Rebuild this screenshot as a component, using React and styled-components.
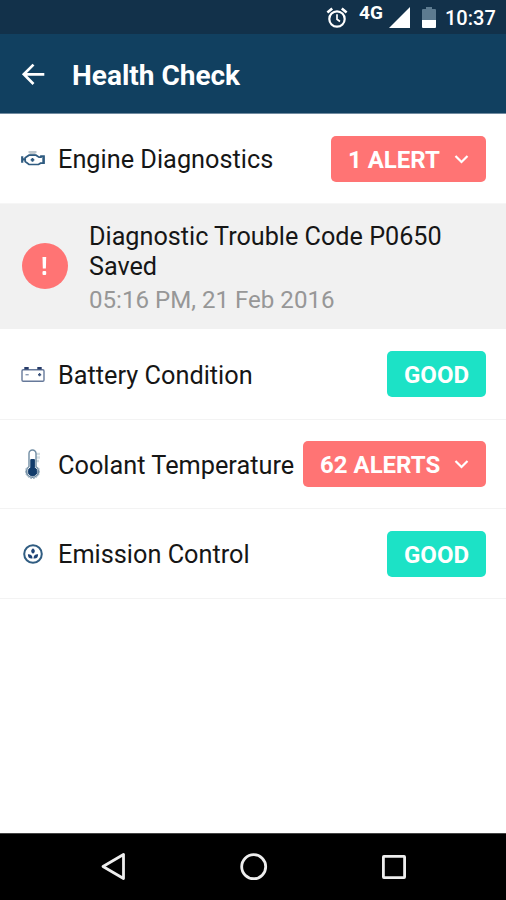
import React, { useState } from 'react';
import styled, { createGlobalStyle } from 'styled-components';

const GlobalStyle = createGlobalStyle`
  * {
    box-sizing: border-box;
  }

  body {
    margin: 0;
    background-color: #fff;
    font-family: Roboto, 'Liberation Sans', sans-serif;
  }

  svg {
    display: block;
    flex-shrink: 0;
  }
`;

// Styled Components
const Screen = styled.div`
  display: flex;
  flex-direction: column;
  height: 900px;
  width: 506px;
  overflow: hidden;
  background-color: #fff;
`;

const StatusBar = styled.div`
  display: flex;
  align-items: center;
  justify-content: flex-end;
  height: 34px;
  padding-right: 11px;
  padding-top: 1px;
  background-color: #12314a;
  color: #fff;
`;

const Network = styled.span`
  width: 25px;
  margin: 0 5px 9px 11px;
  font-size: 19px;
  font-weight: 700;
  line-height: 18px;
`;

const PhoneBattery = styled.div`
  margin-left: 12px;
`;

const Clock = styled.span`
  width: 50px;
  margin-left: 9px;
  font-size: 20px;
  font-weight: 500;
  line-height: 24px;
  white-space: nowrap;
`;

const AppBar = styled.header`
  display: flex;
  align-items: center;
  height: 80px;
  padding: 0 20px;
  background-color: #114060;
  border-bottom: 1px solid #718ba0;
  color: #fff;
`;

const BackButton = styled.button`
  width: 26px;
  height: 26px;
  padding: 0;
  border: none;
  background: none;
  color: #fff;
  cursor: pointer;
`;

const Title = styled.h1`
  margin: 5px 0 0 26px;
  font-size: 28px;
  font-weight: 700;
  line-height: 32px;
`;

const List = styled.main`
  flex: 1;
`;

const Row = styled.div`
  display: flex;
  align-items: center;
  height: ${({ $height }) => $height}px;
  padding: 0 20px;
  border-bottom: 1px solid ${({ $open }) => ($open ? '#f6f6f6' : '#f3f3f3')};
`;

const RowIcon = styled.div`
  display: flex;
  justify-content: center;
  width: 26px;
  margin-right: 12px;
`;

const RowLabel = styled.span`
  flex: 1;
  padding-top: 3px;
  color: #161616;
  font-size: 25.3px;
  line-height: 30px;
  white-space: nowrap;
`;

const Badge = styled.button`
  display: flex;
  align-items: center;
  justify-content: space-between;
  width: ${({ $width }) => $width}px;
  height: 46px;
  padding: 2px 17px 0 17px;
  border: none;
  border-radius: 5px;
  background-color: ${({ $good }) => ($good ? '#1ce2c6' : '#ff7474')};
  color: #fff;
  font-family: inherit;
  font-size: 24px;
  font-weight: 700;
  line-height: 28px;
  white-space: nowrap;
`;

const Detail = styled.div`
  display: flex;
  align-items: center;
  height: 125px;
  padding: 0 20px 0 22px;
  background-color: #f1f1f1;
`;

const AlertDot = styled.div`
  display: flex;
  align-items: center;
  justify-content: center;
  width: 46px;
  height: 46px;
  margin: 0 21px 1px 0;
  border-radius: 50%;
  background-color: #ff7474;
`;

const DetailText = styled.div`
  width: 380px;
  padding-top: 4px;
`;

const DetailTitle = styled.p`
  margin: 0;
  color: #161616;
  font-size: 25.2px;
  line-height: 30px;
`;

const DetailTime = styled.p`
  margin: 3px 0 0;
  color: #979797;
  font-size: 24.1px;
  line-height: 30px;
`;

const NavBar = styled.nav`
  display: flex;
  align-items: center;
  justify-content: space-between;
  height: 67px;
  padding: 0 99px 0 100px;
  border-top: 1px solid #444;
  background-color: #000;
`;

// Icons
const AlarmIcon = () => (
  <svg width="22" height="22" viewBox="0 0 22 22" fill="none" stroke="#fff" strokeWidth="2.2">
    <circle cx="11" cy="12" r="7.7" />
    <path d="M11 7.3V12.3L14 14.5" strokeWidth="1.7" />
    <path d="M1.4 5.6L6.2 1.6M15.8 1.6L20.6 5.6" strokeWidth="2.6" />
  </svg>
);

const SignalIcon = () => (
  <svg width="21" height="21" viewBox="0 0 21 21">
    <path d="M0 21L21 0V21Z" fill="#fff" />
  </svg>
);

const PhoneBatteryIcon = () => (
  <svg width="14" height="21" viewBox="0 0 14 21">
    <path d="M4 0H10V2H13Q14 2 14 3V13H0V3Q0 2 1 2H4Z" fill="#5d7b90" />
    <path d="M0 13H14V20Q14 21 13 21H1Q0 21 0 20Z" fill="#fff" />
  </svg>
);

const BackIcon = () => (
  <svg width="26" height="26" viewBox="0 0 26 26" fill="none" stroke="#fff" strokeWidth="2.7">
    <path d="M24.3 13.3H3.8M13.5 3.6L3.8 13.3L13.5 23" />
  </svg>
);

const ChevronIcon = () => (
  <svg width="15" height="10" viewBox="0 0 15 10" fill="none" stroke="#fff" strokeWidth="2.2">
    <path d="M1.5 1L7.5 7L13.5 1" />
  </svg>
);

const EngineIcon = () => (
  <svg width="24" height="16" viewBox="0 0 24 16" fill="none" stroke="#2f5b80" strokeWidth="1.7">
    <path d="M7.5 1.1H15.5M8.5 3H14.5" stroke="#a9b5bd" strokeWidth="1.5" />
    <path d="M1.2 5.2V11.7M1 8.4H4" strokeWidth="2.2" />
    <path d="M4.2 6.7L8 4.2H15L18 6.2H20V5.2H23V12.2H19.5L17.5 13.5H8L4.2 10.5Z" />
    <path d="M22.3 5.2V12.2" strokeWidth="2" />
    <path d="M9.7 8.9H13.3M11.5 7.1V10.7" strokeWidth="1.8" />
  </svg>
);

const BatteryIcon = () => (
  <svg width="24" height="16" viewBox="0 0 24 16" fill="none" stroke="#66799a" strokeWidth="1.4">
    <rect x="1" y="3.7" width="22" height="11.5" rx="1.2" />
    <path d="M3.3 2.2H7.7M16.3 2.2H20.7" stroke="#263a68" strokeWidth="2.4" />
    <path d="M4.5 8.7H7.7" stroke="#8b9bb4" />
    <path d="M17 8.7H20.2M18.6 7.1V10.3" stroke="#40577f" />
  </svg>
);

const CoolantIcon = () => (
  <svg width="18" height="30" viewBox="0 0 18 30" fill="none">
    <path d="M12 5H16M12 8.5H16M12 12H15" stroke="#d3dde2" strokeWidth="2.6" />
    <path d="M5 17.5V4.5A3.5 3.5 0 0 1 12 4.5V17.5A6 6 0 1 1 5 17.5Z" fill="#fff" stroke="#718da3" strokeWidth="1.4" />
    <path d="M6.8 10.5H10.4V18.5A4.4 4.4 0 1 1 6.8 18.5Z" fill="#123c6b" stroke="#123c6b" />
    <path d="M2.5 18.8A7 7 0 1 0 14.5 18.8" stroke="#8ea6b8" strokeWidth="1" strokeDasharray="2 1" />
  </svg>
);

const EmissionIcon = () => (
  <svg width="20" height="20" viewBox="0 0 20 20" fill="#1f4377">
    <circle cx="10" cy="10" r="8.8" fill="#fff" stroke="#315d82" strokeWidth="2" />
    <path d="M10 4.2Q13.8 7 10 9.8Q6.2 7 10 4.2Z" />
    <path d="M9.5 14.4Q4.8 15 4.9 10.2Q9.4 10 9.5 14.4Z" />
    <path d="M10.5 14.4Q15.2 15 15.1 10.2Q10.6 10 10.5 14.4Z" />
  </svg>
);

const ExclamationIcon = () => (
  <svg width="6" height="20" viewBox="0 0 6 20" fill="#fff">
    <path d="M0.5 1H4.2L3.9 12.5H0.8Z" />
    <rect x="0.5" y="15" width="3.7" height="4" rx="1" />
  </svg>
);

const checks = [
  { label: 'Battery Condition', icon: <BatteryIcon />, status: 'GOOD', good: true, width: 99, height: 91 },
  { label: 'Coolant Temperature', icon: <CoolantIcon />, status: '62 ALERTS', width: 183, height: 89 },
  { label: 'Emission Control', icon: <EmissionIcon />, status: 'GOOD', good: true, width: 99, height: 90 },
];

// Main Component
const App = () => {
  const [isOpen, setIsOpen] = useState(true);

  return (
    <Screen>
      <GlobalStyle />
      <StatusBar>
        <AlarmIcon />
        <Network>4G</Network>
        <SignalIcon />
        <PhoneBattery>
          <PhoneBatteryIcon />
        </PhoneBattery>
        <Clock>10:37</Clock>
      </StatusBar>
      <AppBar>
        <BackButton aria-label="Back">
          <BackIcon />
        </BackButton>
        <Title>Health Check</Title>
      </AppBar>
      <List>
        <Row $height={90} $open={isOpen}>
          <RowIcon><EngineIcon /></RowIcon>
          <RowLabel>Engine Diagnostics</RowLabel>
          <Badge $width={155} onClick={() => setIsOpen(!isOpen)}>
            1 ALERT
            <ChevronIcon />
          </Badge>
        </Row>
        {isOpen && (
          <Detail>
            <AlertDot><ExclamationIcon /></AlertDot>
            <DetailText>
              <DetailTitle>Diagnostic Trouble Code P0650 Saved</DetailTitle>
              <DetailTime>05:16 PM, 21 Feb 2016</DetailTime>
            </DetailText>
          </Detail>
        )}
        {checks.map((check) => (
          <Row key={check.label} $height={check.height}>
            <RowIcon>{check.icon}</RowIcon>
            <RowLabel>{check.label}</RowLabel>
            <Badge $good={check.good} $width={check.width}>
              {check.status}
              {!check.good && <ChevronIcon />}
            </Badge>
          </Row>
        ))}
      </List>
      <NavBar>
        <svg width="26" height="30" viewBox="0 0 26 30" fill="none" stroke="#eee" strokeWidth="2.8" strokeLinejoin="round">
          <path d="M3 14.5L23.5 2.5V26.5Z" />
        </svg>
        <svg width="28" height="28" viewBox="0 0 28 28" fill="none" stroke="#eee" strokeWidth="2.8">
          <circle cx="13.7" cy="13.7" r="12" />
        </svg>
        <svg width="26" height="26" viewBox="0 0 26 26" fill="none" stroke="#eee" strokeWidth="2.8">
          <rect x="2.4" y="2.4" width="21.2" height="21.2" rx="0.5" />
        </svg>
      </NavBar>
    </Screen>
  );
};

export default App;
